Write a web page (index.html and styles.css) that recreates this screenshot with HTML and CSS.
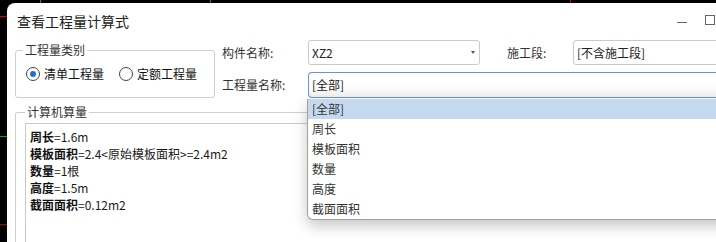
FILE: index.html
```html
<!DOCTYPE html>
<html lang="zh-CN">
<head>
  <meta charset="UTF-8" />
  <title>查看工程量计算式</title>
  <link rel="stylesheet" href="styles.css">
</head>
<body>
  <div class="dialog">
    <div class="titlebar">
      <span class="title">查看工程量计算式</span>
      <div class="win-btns">
        <span class="btn-min"></span>
        <span class="btn-max"></span>
      </div>
    </div>

    <div class="top">
      <fieldset class="group kind">
        <legend>工程量类别</legend>
        <label class="radio checked"><span class="dot"></span>清单工程量</label>
        <label class="radio"><span class="dot"></span>定额工程量</label>
      </fieldset>

      <div class="form">
        <div class="row">
          <span class="label">构件名称:</span>
          <div class="combo part">XZ2<span class="arrow"></span></div>
          <span class="label stage-label">施工段:</span>
          <div class="combo stage">[不含施工段]</div>
        </div>
        <div class="row">
          <span class="label">工程量名称:</span>
          <div class="combo focus">[全部]</div>
        </div>
      </div>
    </div>

    <fieldset class="group calc">
      <legend>计算机算量</legend>
      <div class="result">
        <div><b>周长</b>=1.6m</div>
        <div><b>模板面积</b>=2.4&lt;原始模板面积&gt;=2.4m2</div>
        <div><b>数量</b>=1根</div>
        <div><b>高度</b>=1.5m</div>
        <div><b>截面面积</b>=0.12m2</div>
      </div>
    </fieldset>

    <ul class="dropdown">
      <li class="active">[全部]</li>
      <li>周长</li>
      <li>模板面积</li>
      <li>数量</li>
      <li>高度</li>
      <li>截面面积</li>
    </ul>
  </div>
</body>
</html>
```

FILE: styles.css
```css
body {
  margin: 0;
  width: 716px;
  height: 242px;
  overflow: hidden;
  font-family: "Noto Sans CJK SC", "Noto Sans", sans-serif;
  font-size: 12px;
  color: #333;
  background:
    linear-gradient(#1c9a1c, #1c9a1c) 40px 0 / 1px 3px no-repeat,
    linear-gradient(#1c9a1c, #1c9a1c) 210px 0 / 1px 3px no-repeat,
    linear-gradient(#c00, #c00) 570px 0 / 1px 3px no-repeat,
    linear-gradient(#c00, #c00) 0 16px / 7px 1px no-repeat,
    linear-gradient(#1c9a1c, #1c9a1c) 0 136px / 7px 1px no-repeat,
    linear-gradient(#a00, #a00) 0 224px / 7px 1px no-repeat,
    #000;
}

.dialog {
  position: relative;
  margin: 3px 0 0 7px;
  width: 709px;
  height: 239px;
  background: #fff;
  border-top-left-radius: 8px;
  overflow: hidden;
}

/* title bar */
.titlebar { height: 37px; display: flex; align-items: center; padding-left: 10px; }
.title { font-size: 14px; line-height: 18px; color: #222; margin-top: -2px; }
.win-btns { margin-left: auto; display: flex; align-items: center; gap: 18px; padding-right: 1px; margin-top: -4px; }
.btn-min { width: 10px; height: 1px; background: #666; margin-top: 6px; }
.btn-max { width: 8px; height: 8px; border: 1px solid #666; }

/* group boxes */
.group { margin: 0; border: 1px solid #cfcfcf; border-radius: 3px; min-width: 0; }
.group legend { line-height: 14px; padding: 0 2px; color: #333; }

.top { display: flex; padding-left: 8px; }
.kind {
  flex: none; width: 200px; box-sizing: border-box; margin-top: 3px;
  padding: 9px 0 16px 10px; display: flex; white-space: nowrap;
}
.kind legend { margin-left: -3px; }
.radio { display: flex; align-items: center; line-height: 14px; color: #111; margin-right: 15px; }
.radio .dot {
  width: 12px; height: 12px; border: 1px solid #444; border-radius: 50%;
  margin-right: 4px; display: flex; align-items: center; justify-content: center;
}
.radio.checked .dot::after { content: ""; width: 6px; height: 6px; border-radius: 50%; background: #1f6fd6; }

/* right form */
.form { flex: none; margin-left: 7px; display: flex; flex-direction: column; gap: 7px; white-space: nowrap; }
.row { display: flex; align-items: center; }
.label { flex: none; width: 86px; line-height: 16px; }
.stage-label { width: 66px; margin-left: 27px; }
.combo {
  flex: none; box-sizing: border-box; height: 25px; border: 1px solid #c9c9c9; border-radius: 3px;
  padding-left: 3px; display: flex; align-items: center; color: #222; line-height: 16px;
}
.part { width: 172px; }
.part .arrow {
  margin-left: auto; margin-right: 4px; width: 0; height: 0;
  border-left: 2.5px solid transparent; border-right: 2.5px solid transparent; border-top: 3px solid #555;
}
.stage { width: 200px; }
.focus {
  width: 420px; height: 26px; border-color: #6b93d6; border-right: none;
  border-radius: 4px 0 0 4px; background: linear-gradient(#fff 50%, #f0f0f0);
}

/* calculation box */
.calc { width: 760px; margin: 7px 0 0 8px; padding: 4px 0 0 9px; border-bottom: none; }
.result {
  height: 140px; border: 1px solid #c9c9c9; border-right: none; border-bottom: none;
  padding: 4px 4px; line-height: 17px; color: #1a1a1a;
}
.result b { font-weight: 700; color: #111; }

/* open drop-down list */
.dropdown {
  position: absolute; left: 300px; top: 96px; width: 430px;
  margin: 0; padding: 0; list-style: none; background: #fff;
  border: 1px solid #a0a0a0; border-top: none; border-radius: 0 0 0 6px;
  box-shadow: 0 6px 14px rgba(0, 0, 0, 0.22);
}
.dropdown li { height: 20px; line-height: 20px; padding-left: 4px; color: #333; }
.dropdown li.active { background: #c4d9f0; }
```
